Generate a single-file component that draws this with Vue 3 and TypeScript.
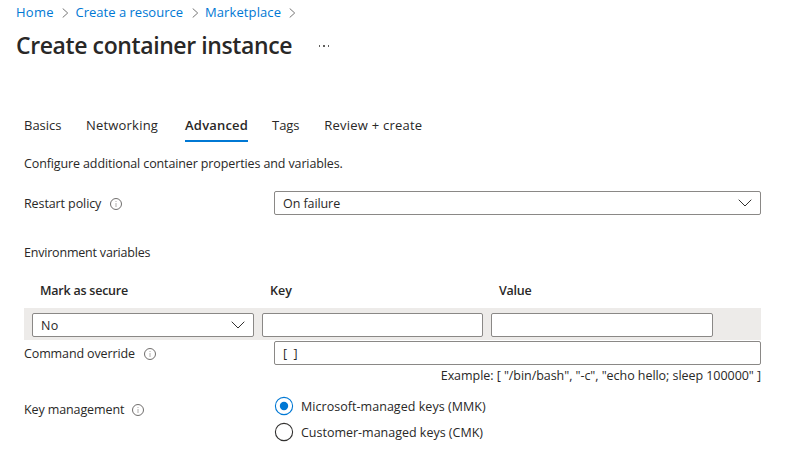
<script setup lang="ts">
import { ref } from 'vue'

interface Item { id: string; label: string }

const crumbs: Item[] = [
  { id: 'home', label: 'Home' },
  { id: 'create', label: 'Create a resource' },
  { id: 'market', label: 'Marketplace' },
]
const tabs: Item[] = [
  { id: 'basics', label: 'Basics' },
  { id: 'networking', label: 'Networking' },
  { id: 'advanced', label: 'Advanced' },
  { id: 'tags', label: 'Tags' },
  { id: 'review', label: 'Review + create' },
]
const keyOptions: Item[] = [
  { id: 'mmk', label: 'Microsoft-managed keys (MMK)' },
  { id: 'cmk', label: 'Customer-managed keys (CMK)' },
]
const activeTab = ref('advanced')
const keyMode = ref('mmk')
const envKey = ref('')
const envValue = ref('')
const command = ref('[ ]')
</script>

<template>
  <main class="page">
    <nav class="crumbs">
      <template v-for="c in crumbs" :key="c.id">
        <a :class="['crumb', c.id]">{{ c.label }}</a>
        <svg class="sep" width="7" height="10" viewBox="0 0 7 10"><path d="M.7 .5 5.7 5 .7 9.5" /></svg>
      </template>
    </nav>

    <header class="heading">
      <h1>Create container instance</h1>
      <svg class="more" width="12" height="4" viewBox="0 0 12 4">
        <path d="M1 1h1v2h-1zM5 1h2v2H5zM10 1h1v2h-1z" />
      </svg>
    </header>

    <div class="tabs">
      <button
        v-for="t in tabs" :key="t.id"
        :class="['tab', t.id, { active: activeTab === t.id }]"
        @click="activeTab = t.id"
      >{{ t.label }}</button>
    </div>

    <p class="intro">Configure additional container properties and variables.</p>

    <div class="row restart">
      <div class="label">
        <span class="t-restart">Restart policy</span>
        <svg class="info" width="12" height="12" viewBox="0 0 12 12"><circle cx="6" cy="6" r="5.5" /><path d="M6 3v1M6 5v4" /></svg>
      </div>
      <div class="field select">
        <span class="t-fail">On failure</span>
        <svg class="chev" width="14" height="8" viewBox="0 0 14 8"><path d="M.7.7 7 7 13.3.7" /></svg>
      </div>
    </div>

    <div class="env-title">Environment variables</div>
    <div class="env-head">
      <span class="t-mark">Mark as secure</span>
      <span class="t-key">Key</span>
      <span class="t-value">Value</span>
    </div>
    <div class="env-row">
      <div class="field select">
        <span class="t-no">No</span>
        <svg class="chev" width="14" height="8" viewBox="0 0 14 8"><path d="M.7.7 7 7 13.3.7" /></svg>
      </div>
      <input v-model="envKey" class="field" />
      <input v-model="envValue" class="field" />
    </div>

    <div class="row command">
      <div class="label">
        <span class="t-command">Command override</span>
        <svg class="info" width="12" height="12" viewBox="0 0 12 12"><circle cx="6" cy="6" r="5.5" /><path d="M6 3v1M6 5v4" /></svg>
      </div>
      <input v-model="command" class="field t-brackets" />
    </div>
    <div class="example">Example: [ "/bin/bash", "-c", "echo hello; sleep 100000" ]</div>

    <div class="row keys">
      <div class="label">
        <span class="t-manage">Key management</span>
        <svg class="info" width="12" height="12" viewBox="0 0 12 12"><circle cx="6" cy="6" r="5.5" /><path d="M6 3v1M6 5v4" /></svg>
      </div>
      <div class="radios">
        <div v-for="o in keyOptions" :key="o.id" :class="['radio', o.id, { on: keyMode === o.id }]" @click="keyMode = o.id">
          <svg width="20" height="20" viewBox="0 0 20 20">
            <circle class="ring" cx="10" cy="10" r="8.6" />
            <circle v-if="keyMode === o.id" class="dot" cx="10" cy="10" r="4.2" />
          </svg>
          <span>{{ o.label }}</span>
        </div>
      </div>
    </div>
  </main>
</template>

<style>
body {
  background: #fff;
}
</style>

<style scoped>
.page {
  box-sizing: border-box;
  width: 811px;
  height: 452px;
  overflow: hidden;
  padding: 3px 50px 0 24px;
  color: #292827;
  font-family: "Open Sans", "Noto Sans", sans-serif;
  font-size: 12.5px;
  line-height: 20px;
  white-space: nowrap;
}
svg {
  display: block;
  flex: none;
  fill: none;
}
.crumbs {
  display: flex;
  align-items: center;
  height: 20px;
  margin-left: -8px;
  font-size: 13px;
}
.crumb {
  padding-bottom: 2px;
  color: #0078d4;
}
.home { width: 46px; letter-spacing: .25px; }
.create { width: 116px; letter-spacing: .01px; }
.market { width: 83.5px; letter-spacing: .1px; }
.sep {
  margin-right: 6.5px;
  stroke: #767676;
}
.heading {
  display: flex;
  align-items: center;
  height: 46px;
  margin-left: -8px;
}
h1 {
  width: 302px;
  margin: 0;
  padding-bottom: 2px;
  font-size: 23px;
  font-weight: 600;
  line-height: 44px;
  letter-spacing: -.4px;
}
.more {
  fill: #605e5c;
}
.tabs {
  display: flex;
  gap: 24.5px;
  height: 28px;
  margin-top: 45px;
}
.tab {
  box-sizing: border-box;
  height: 28px;
  padding: 0 0 3px;
  border: 0;
  border-bottom: 2px solid transparent;
  background: none;
  color: inherit;
  font: 13px/23px "Open Sans", "Noto Sans", sans-serif;
}
.tab.active {
  border-color: #0078d4;
  font-weight: 600;
}
.basics { letter-spacing: -.02px; }
.networking { letter-spacing: .21px; }
.advanced { margin-left: 2.5px; letter-spacing: .19px; }
.tags { margin-left: -.5px; letter-spacing: -.1px; }
.review { margin-left: .5px; letter-spacing: .22px; }
.intro {
  height: 20px;
  margin: 12px 0 0;
  letter-spacing: -.12px;
}
.row {
  display: flex;
  width: 737px;
}
.label {
  display: flex;
  flex: none;
  align-items: center;
  gap: 8px;
  width: 250px;
  height: 24px;
}
.info {
  margin-top: 1px;
  stroke: #605e5c;
  stroke-width: .9;
}
.info path {
  stroke: #a5a3a1;
}
.field {
  box-sizing: border-box;
  flex: 1;
  min-width: 0;
  height: 24px;
  padding: 0 8px;
  border: 1px solid #8a8886;
  border-radius: 2px;
  background: #fff;
  color: inherit;
  font: inherit;
  outline: 0;
}
.select {
  display: flex;
  align-items: center;
  justify-content: space-between;
}
.select span,
.restart .label span,
.command .label span {
  padding-top: 2px;
}
.chev {
  stroke: #323130;
}
.restart {
  margin-top: 17px;
}
.env-title {
  height: 20px;
  margin-top: 28px;
  letter-spacing: -.2px;
}
.env-head {
  display: grid;
  grid-template-columns: 230px 229px 1fr;
  height: 20px;
  margin-top: 18px;
  margin-bottom: 7px;
  padding-left: 16px;
  font-weight: 600;
}
.env-row {
  box-sizing: border-box;
  display: grid;
  grid-template-columns: 222px 221px 222px;
  gap: 8px;
  width: 737px;
  height: 32px;
  padding: 5px 8px 0;
  background: #edebe9;
}
.command {
  margin-top: 1px;
}
.restart .label,
.command .label {
  gap: 9px;
}
.example {
  width: 737px;
  height: 20px;
  margin-top: 1px;
  text-align: right;
  letter-spacing: -.05px;
}
.keys {
  margin-top: 10px;
}
.keys .label {
  margin-top: 2px;
}
.keys .info {
  margin-top: 0;
}
.radio {
  display: flex;
  align-items: center;
  gap: 7px;
  height: 20px;
  margin-bottom: 6px;
}
.radio span {
  padding-top: 2px;
}
.ring {
  stroke: #323130;
  stroke-width: 1.1;
}
.on .ring {
  stroke: #0078d4;
}
.dot {
  fill: #0078d4;
}
.mmk { letter-spacing: .04px; }
.cmk { letter-spacing: -.01px; }
.t-restart { letter-spacing: -.1px; }
.t-fail { letter-spacing: -.08px; }
.t-mark { letter-spacing: -.23px; }
.t-key { letter-spacing: .05px; }
.t-value { letter-spacing: -.23px; }
.t-no { letter-spacing: .4px; }
.t-command { letter-spacing: -.12px; }
.t-manage { letter-spacing: -.11px; }
.t-brackets { word-spacing: 2px; letter-spacing: .6px; }
</style>
